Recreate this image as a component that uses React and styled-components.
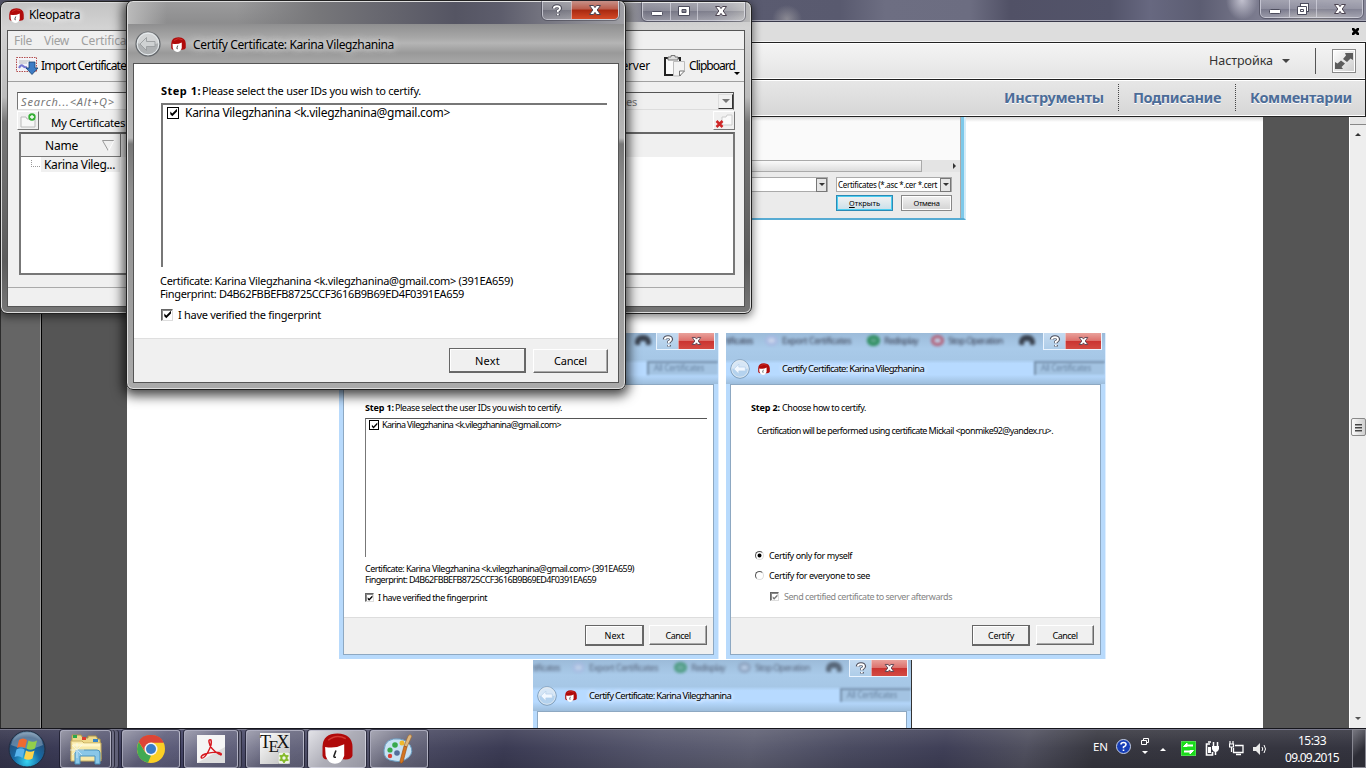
import React, { useLayoutEffect, useRef } from "react";
import styled, { createGlobalStyle, css } from "styled-components";

const Global = createGlobalStyle`
  * { box-sizing: border-box; }
  body { margin: 0; overflow: hidden; background: #555; }
  svg { display: block; flex: none; }
`;

const ui = `"Noto Sans", "Open Sans", sans-serif`;

/* ---------- text ---------- */

const Line = styled.span`
  display: block;
  flex: none;
  width: ${(p) => (p.$w ? `${p.$w}px` : "auto")};
  margin-left: ${(p) => p.$ml || 0}px;
  margin-top: ${(p) => p.$mt || 0}px;
  font-family: ${ui};
  font-size: ${(p) => p.$size || 11}px;
  line-height: ${(p) => p.$lh || 13}px;
  font-weight: ${(p) => (p.$bold ? 700 : 400)};
  font-style: ${(p) => (p.$italic ? "italic" : "normal")};
  color: ${(p) => p.$color || "#000"};
  white-space: pre;
  ${(p) => p.$shadow && css`text-shadow: ${p.$shadow};`}
`;

/* Spreads a label over the given width by adjusting its tracking. */
function Label({ w, children, ...rest }) {
  const ref = useRef(null);
  useLayoutEffect(() => {
    const el = ref.current;
    if (!w || !el) return;
    el.style.letterSpacing = "0px";
    const natural = el.getBoundingClientRect().width;
    const n = el.textContent.length;
    el.style.letterSpacing = `${(w - natural) / n}px`;
  }, [w, children]);
  return (
    <Line $w={w} {...rest}>
      <span ref={ref}>{children}</span>
    </Line>
  );
}

/* ---------- shared drawings ---------- */

const FaceIcon = ({ size = 15 }) => (
  <svg width={size} height={size} viewBox="0 0 30 30">
    <path d="M.500 22V13Q1 .500 15 .500Q29 1 29.500 13V22Q28.500 26 21 25.500H5Q1 25.500 .500 22Z" fill="#b00a0a" />
    <path d="M6 7Q14 .500 23 5.500" stroke="#d23a33" strokeWidth="1.500" fill="none" />
    <path d="M3 13.500Q13 15.500 21.500 11V22Q19 29.800 12.500 29.800Q6 29.500 3.500 22Z" fill="#fff" />
    <path d="M13.500 17L11.500 22.500Q11.200 23.800 13.500 23.500" stroke="#222" strokeWidth="1.500" fill="none" />
  </svg>
);

const BackIcon = ({ size = 26, blue }) => (
  <svg width={size} height={size} viewBox="0 0 26 26">
    <circle cx="13" cy="13" r="12" fill={blue ? "#b4d2ee" : "#aeb1b3"} stroke={blue ? "#7290ad" : "#63676b"} strokeWidth="1.2" />
    <path d="M2 12a11 11 0 0 1 22 0Q13 16 2 12Z" fill="#fff" opacity=".45" />
    <circle cx="13" cy="13" r="10.8" fill="none" stroke="#e8edf0" strokeWidth="1" />
    <path d="M5 13l6.500-6.500v4H20v5h-8.500v4Z" fill={blue ? "#f2f8ff" : "#cfd2d3"} stroke={blue ? "#b3cfe9" : "#999c9e"} strokeWidth=".9" />
  </svg>
);

const Glyph = {
  min: (
    <svg width="14" height="12" viewBox="0 0 14 12"><rect x="1.5" y="6.5" width="11" height="4" rx="1" fill="#fff" stroke="#4d4d5d" /></svg>
  ),
  max: (
    <svg width="14" height="12" viewBox="0 0 14 12"><path d="M1.5 1.5h11v9h-11ZM5 4.5v3h4v-3Z" fillRule="evenodd" fill="#fff" stroke="#4d4d5d" /></svg>
  ),
  restore: (
    <svg width="14" height="14" viewBox="0 0 14 14">
      <rect x="4.5" y="1.5" width="8" height="8" fill="#fff" stroke="#4d4d5d" />
      <path d="M1.5 4.5h9v8h-9ZM4.5 7.5v2h3v-2Z" fillRule="evenodd" fill="#fff" stroke="#4d4d5d" />
    </svg>
  ),
  close: (
    <svg width="14" height="12" viewBox="0 0 14 12"><path d="M1.5 1.5h4L7 3.6l1.5-2.1h4L9.2 6l3.3 4.5h-4L7 8.4l-1.5 2.1h-4L4.8 6Z" fill="#fff" stroke="#4b4350" /></svg>
  ),
  closeSmall: (
    <svg width="11" height="10" viewBox="0 0 14 12"><path d="M1.5 1.5h4L7 3.6l1.5-2.1h4L9.2 6l3.3 4.5h-4L7 8.4l-1.5 2.1h-4L4.8 6Z" fill="#fff" stroke="#5b4350" strokeWidth="1.2" /></svg>
  ),
  help: (
    <svg width="12" height="13" viewBox="0 0 12 13">
      <path d="M2.5 4.5Q3 2 6 2t3.300 2.300Q9.300 5.600 7 7v1.300M7 10v1.500" fill="none" stroke="#4b4b58" strokeWidth="3.600" />
      <path d="M2.800 4.500Q3 2.200 6 2.200t3 2.200Q9 5.500 6.800 6.800v1.400M6.800 9.800v1.400" fill="none" stroke="#fff" strokeWidth="1.900" />
    </svg>
  ),
};

const Check = ({ size = 12, color = "#000" }) => (
  <svg width={size} height={size} viewBox="0 0 12 12"><path d="M2.500 5v2.800L4.700 10 9.800 4.800V2L4.700 7.200Z" fill={color} /></svg>
);

const CheckBox = styled.span`
  display: flex;
  flex: none;
  align-items: center;
  justify-content: center;
  width: ${(p) => p.$size}px;
  height: ${(p) => p.$size}px;
  background: #fff;
  border: 1px solid;
  border-color: ${(p) => (p.$flat ? "#000" : "#666 #ddd #ddd #666")};
  ${(p) => !p.$flat && css`box-shadow: inset 1px 1px 0 #888;`}
`;

const Radio = styled.span`
  flex: none;
  width: 9px;
  height: 9px;
  border-radius: 50%;
  border: 1px solid;
  border-color: #555 #ddd #ddd #555;
  background: ${(p) => (p.$on ? "radial-gradient(circle, #000 0 1.500px, #fff 2.400px)" : "#fff")};
`;

const Row = styled.div`
  display: flex;
  align-items: center;
  gap: ${(p) => p.$gap || 0}px;
  height: ${(p) => (p.$h ? `${p.$h}px` : "auto")};
  margin-top: ${(p) => p.$mt || 0}px;
  margin-left: ${(p) => p.$ml || 0}px;
`;

const PushButton = styled.button`
  display: flex;
  align-items: center;
  justify-content: center;
  padding: 0;
  width: ${(p) => p.$w}px;
  height: ${(p) => p.$h}px;
  background: #f0f0f0;
  border: 1px solid;
  border-color: ${(p) => (p.$primary ? "#666" : "#fff #696969 #696969 #fff")};
  box-shadow: ${(p) => (p.$primary ? "inset -1px -1px 0 #696969, inset 1px 1px 0 #fff" : "inset -1px -1px 0 #a9a9a9")};
`;

/* ---------- caption buttons ---------- */

const Captions = styled.div`
  position: absolute;
  top: ${(p) => p.$top}px;
  right: ${(p) => p.$right}px;
  display: flex;
  height: ${(p) => p.$h || 19}px;
  border: 1px solid ${(p) => (p.$blue ? "#eaf4ff" : "rgba(235,235,245,.65)")};
  border-top: 0;
  border-radius: ${(p) => (p.$blue ? "0" : "0 0 5px 5px")};
  overflow: hidden;
  outline: 1px solid ${(p) => (p.$blue ? "transparent" : "rgba(40,40,55,.4)")};
`;

const Caption = styled.span`
  display: flex;
  align-items: center;
  justify-content: center;
  width: ${(p) => p.$w}px;
  border-left: 1px solid rgba(225, 225, 235, 0.6);
  background: ${(p) =>
    p.$red
      ? p.$soft
        ? "linear-gradient(#e9a19b, #dd716c 48%, #cb3431 52%, #d34b43)"
        : "linear-gradient(#c79188, #b95c4c 45%, #a82810 50%, #d44a27)"
      : p.$soft
        ? "linear-gradient(#c4daf0, #aecde9)"
        : "linear-gradient(rgba(255,255,255,.28), rgba(255,255,255,.12) 50%, rgba(70,70,90,.12) 51%, rgba(255,255,255,.2))"};
  &:first-child { border-left: 0; }
`;

/* ---------- reader ---------- */

const Desktop = styled.div`
  position: relative;
  display: flex;
  flex-direction: column;
  width: 1366px;
  height: 768px;
  overflow: hidden;
`;

const Reader = styled.div`
  position: relative;
  display: flex;
  flex-direction: column;
  height: 728px;
`;

const ReaderTitle = styled.div`
  height: 22px;
  flex: none;
  border-bottom: 1px solid #39394a;
  box-shadow: inset 0 -1px 0 #aaaab8;
  background:
    radial-gradient(ellipse 15px 14px at 787px 19px, #a2a0a4aa, transparent),
    radial-gradient(ellipse 16px 20px at 1242px 0, #d5d4e0cc, transparent),
    radial-gradient(ellipse 45px 18px at 1315px 24px, #c9c5b9aa, transparent),
    linear-gradient(90deg, #5a5b70 750px, #595a6f 840px, #6d6e82 885px, #6c6d81 970px, #515166 1010px, #53546a 1110px, #676880 1150px, #5c5d72 1200px, #7d7d90 1260px, #8a8a9b);
`;

const TabBar = styled.div`
  display: flex;
  align-items: center;
  justify-content: flex-end;
  flex: none;
  height: 21px;
  padding: 0 7px 2px 0;
  background: #ddd;
  border-bottom: 1px solid #222;
  box-shadow: inset 0 -1px 0 #f4f4f4;
`;

const ToolBar = styled.div`
  display: flex;
  align-items: center;
  justify-content: flex-end;
  flex: none;
  height: 37px;
  padding-right: 9px;
  background: linear-gradient(#f4f4f4, #e4e4e4);
  border-bottom: 1px solid #222;
  border-right: 1px solid #222;
  box-shadow: inset 0 1px 0 #fff, inset 0 -1px 0 #fff;
`;

const ToolDivider = styled.span`
  width: 1px;
  height: 26px;
  margin: 0 16px 0 25px;
  background: #555;
`;

const ExpandButton = styled.span`
  display: flex;
  align-items: center;
  justify-content: center;
  width: 24px;
  height: 24px;
  border: 1px solid #888;
  box-shadow: inset 0 0 0 1px #fff;
  background: linear-gradient(135deg, #fff, #ccc);
`;

const PanelBar = styled.div`
  display: flex;
  align-items: center;
  justify-content: flex-end;
  flex: none;
  height: 37px;
  padding: 0 13px 2px 0;
  background: linear-gradient(#e7e7e7, #d6d6d6);
  border-bottom: 1px solid #222;
  border-right: 1px solid #222;
  box-shadow: inset 0 1px 0 #fff, inset 0 -1px 0 #fff;
`;

const DotDivider = styled.span`
  height: 27px;
  margin: 0 14px;
  border-left: 1px dotted #444;
`;

const Workspace = styled.div`
  display: flex;
  flex: 1;
  min-height: 0;
  background: #555;
`;

const NavStrip = styled.div`
  flex: none;
  width: 42px;
  margin-right: 85px;
  background: #656565;
  border-left: 1px solid #2c2c2c;
  border-right: 1px solid #000;
  box-shadow: inset -1px 0 0 #999;
`;

const Page = styled.div`
  flex: none;
  width: 1136px;
  height: 611px;
  overflow: hidden;
  background: linear-gradient(#d8d8d8, #fff 5px);
`;

const ScrollTrack = styled.div`
  display: flex;
  flex-direction: column;
  align-items: center;
  width: 17px;
  margin-left: 86px;
  background: #eee;
  border-left: 1px solid #fff;
`;

const SplitBox = styled.span`
  width: 17px;
  height: 8px;
  background: #e6e6e6;
  border-bottom: 1px solid #888;
`;

const ScrollThumb = styled.span`
  display: flex;
  flex-direction: column;
  align-items: center;
  justify-content: center;
  gap: 2px;
  width: 15px;
  height: 18px;
  margin: 282px 0 281px;
  border: 1px solid #888;
  border-radius: 2px;
  background: linear-gradient(90deg, #fafafa, #cfcfcf);
`;

const Grip = styled.i`
  width: 7px;
  height: 1px;
  background: #444;
  box-shadow: 0 1px 0 #999;
`;

const Triangle = styled.i`
  flex: none;
  width: 0;
  height: 0;
  border: ${(p) => p.$s || 3}px solid transparent;
  ${(p) => (p.$up ? css`border-top: 0; border-bottom-color: ${p.$c || "#333"};` : css`border-bottom: 0; border-top-color: ${p.$c || "#333"};`)}
  margin-top: ${(p) => p.$mt || 0}px;
  margin-left: ${(p) => p.$ml || 0}px;
`;

/* ---------- file dialog figure ---------- */

const OpenFigure = styled.div`
  display: flex;
  flex-direction: column;
  align-items: flex-end;
  width: 627px;
  height: 103px;
  margin-left: 212px;
  background: #ebebeb;
  border-right: 2px solid #d2ebf8;
  border-bottom: 2px solid #57abd3;
  box-shadow: inset -3px 0 0 #7dc8e9, inset -4px 0 0 #aaa;
  padding-right: 4px;
`;

const FileArea = styled.div`
  width: 100%;
  height: 43px;
  background: linear-gradient(#d8d8d8, #fafafa 4px);
`;

const HScroll = styled.div`
  display: flex;
  align-items: center;
  justify-content: space-between;
  width: 100%;
  height: 12px;
  padding-right: 4px;
  background: #e4e4e4;
`;

const HThumb = styled.span`
  width: 583px;
  height: 12px;
  border: 1px solid #aaa;
  background: linear-gradient(#fafafa, #ddd);
`;

const SelectBox = styled.span`
  display: flex;
  align-items: center;
  justify-content: space-between;
  width: ${(p) => p.$w}px;
  height: 15px;
  border: 1px solid #aaa;
  background: #fff;
`;

const SelectArrow = styled.span`
  display: flex;
  align-items: center;
  justify-content: center;
  width: 11px;
  height: 14px;
  flex: none;
  border: 1px solid #777;
  background: #e6e6e6;
`;

const SmallButton = styled.span`
  display: flex;
  align-items: center;
  justify-content: center;
  width: ${(p) => p.$w}px;
  height: 16px;
  border: ${(p) => (p.$hot ? "1px solid #2c8ab5" : "1px solid #888")};
  box-shadow: inset 0 0 0 1px ${(p) => (p.$hot ? "#4bcdf0" : "#fff")};
  background: linear-gradient(#f2f2f2, ${(p) => (p.$hot ? "#c9dfe9" : "#d2d2d2")});
`;

/* ---------- wizard figures on the page ---------- */

const FigureRow = styled.div`
  display: flex;
  gap: 7px;
  margin-top: ${(p) => p.$mt}px;
  margin-left: ${(p) => p.$ml}px;
`;

const Figure = styled.div`
  position: relative;
  display: flex;
  flex-direction: column;
  flex: none;
  width: ${(p) => (p.$dark ? 379 : 380)}px;
  height: 326px;
  padding: 0 4px 4px;
  overflow: hidden;
  background: #b8dafc;
  border-right: 1px solid ${(p) => (p.$dark ? "#333" : "#deeeff")};
`;

const FigureHead = styled.div`
  position: relative;
  display: flex;
  align-items: center;
  flex: none;
  height: 51px;
  margin: 0 -4px;
  padding: 20px 0 0 4px;
  background: linear-gradient(#9cbbd9, #a9cae9 30%, #a6c7e6 52%, #b7daff 60%, #b7daff 82%, #9dbddb);
`;

const Ghost = styled.div`
  position: absolute;
  left: 0;
  top: 1px;
  display: flex;
  align-items: center;
  height: 12px;
  width: 320px;
  overflow: hidden;
  filter: blur(1.400px);
  opacity: ${(p) => (p.$pale ? 0.6 : 0.85)};
`;

const GhostRing = styled.i`
  flex: none;
  width: 13px;
  height: 11px;
  margin: 0 4px 0 ${(p) => p.$ml}px;
  border: 3px solid ${(p) => p.$c};
  border-radius: 50%;
  background: ${(p) => p.$fill || "transparent"};
`;

const Binoculars = styled.i`
  flex: none;
  width: 16px;
  height: 10px;
  margin-left: ${(p) => p.$ml}px;
  border: 5px solid #262a34;
  border-top-width: 6px;
  border-bottom-width: 0;
  border-radius: 7px 7px 2px 2px;
`;

const GhostField = styled.div`
  position: absolute;
  top: 28px;
  right: 0;
  width: 71px;
  height: 14px;
  padding-left: 5px;
  border-top: 2px solid #7690ab;
  border-left: 2px solid #7690ab;
  background: #a3c3e2;
  filter: blur(1.100px);
`;

const FigureBody = styled.div`
  display: flex;
  flex-direction: column;
  flex: none;
  height: 271px;
  background: #fff;
  border: 1px solid #8da8c2;
  padding: 16px 5px 0 21px;
`;

const FigureFoot = styled.div`
  display: flex;
  justify-content: flex-end;
  align-items: center;
  gap: ${(p) => p.$gap}px;
  height: 37px;
  margin: auto -5px 0 -21px;
  padding: 0 6px 2px 0;
  background: #f0f0f0;
  border-top: 1px solid #ddd;
`;

const FigureList = styled.div`
  height: 139px;
  width: 342px;
  margin-top: 4px;
  padding: 0 0 0 3px;
  border-top: 1px solid #555;
  border-left: 1px solid #777;
`;

const FigureCaptions = () => (
  <Captions $top={0} $right={3} $h={17} $blue>
    <Caption $w={21} $soft>{Glyph.help}</Caption>
    <Caption $w={36} $soft $red>{Glyph.closeSmall}</Caption>
  </Captions>
);

const FigureTitle = ({ pale }) => (
  <FigureHead>
    <Ghost $pale={pale}>
      <Label w={27} $size={9} $color="#223">tificates</Label>
      <GhostRing $ml={12} $c="#a9b9e2" $fill="#d2d9ee" />
      <Label w={69} $size={9} $color="#223">Export Certificates</Label>
      <GhostRing $ml={16} $c="#158243" $fill="#4d9f78" />
      <Label w={34} $size={9} $color="#223">Redisplay</Label>
      <GhostRing $ml={13} $c={pale ? "#8291ac" : "#b64b61"} $fill="#c2cfe6" />
      <Label w={55} $size={9} $color="#223">Stop Operation</Label>
      <Binoculars $ml={16} />
    </Ghost>
    <GhostField><Label w={50} $size={8} $lh={10} $color="#6883a0">All Certificates</Label></GhostField>
    <BackIcon size={20} blue />
    <Row $ml={8}><FaceIcon size={12} /></Row>
    <Label w={142} $ml={12} $size={9.5} $shadow="0 0 4px #fff, 0 0 5px #fff">Certify Certificate: Karina Vilegzhanina</Label>
    <FigureCaptions />
  </FigureHead>
);

const CroppedTitle = () => (
  <FigureHead>
    <Ghost><Binoculars $ml={296} /></Ghost>
    <GhostField><Label w={50} $size={8} $lh={10} $color="#6883a0">All Certificates</Label></GhostField>
    <FigureCaptions />
  </FigureHead>
);

/* ---------- top level windows ---------- */

const Window = styled.div`
  position: absolute;
  left: ${(p) => p.$x}px;
  top: ${(p) => p.$y}px;
  display: flex;
  flex-direction: column;
  width: ${(p) => p.$w}px;
  height: ${(p) => p.$h}px;
  border: 1px solid #222;
  border-radius: 7px;
  box-shadow: ${(p) => (p.$active ? "0 3px 12px 3px rgba(0,0,0,.72)" : "0 2px 8px 1px rgba(0,0,0,.5)")}, inset 0 0 0 1px #ddd;
  background: ${(p) => p.$bg};
  padding: 0 6px 6px;
`;

const kleoGlass = `
  linear-gradient(90deg, transparent 82%, #777786 86%, #898996 95%, #bbb) top / 100% 20px no-repeat,
  linear-gradient(#c3c3c3, #d3d3d3 26px, #bbb 95px, #777 120px, #5c5c5c 260px, #777)`;

const dialogGlass = `
  linear-gradient(90deg, #bbb 0, transparent 8%, transparent 22%, #77777a 38%, #555563 66%, #5d5d6c 75%, #a0a0a5 100%) top / 100% 23px no-repeat,
  linear-gradient(#9c9c9d, #8d8d8e 22px, #a6a6a6 36px, #b5b5b5 42px, #999 52px, #a5a5a5 60px, #b8b8b8 137px, #777 143px, #8f8f8f 190px, #aaa)`;

const KleoTitle = styled.div`
  display: flex;
  align-items: center;
  height: 28px;
  flex: none;
  padding: 0 0 2px 2px;
`;

const KleoClient = styled.div`
  display: flex;
  flex-direction: column;
  flex: 1;
  background: #f0f0f0;
  border: 1px solid #555;
`;

const MenuBar = styled.div`
  display: flex;
  align-items: center;
  height: 19px;
  padding-left: 6px;
  gap: 12px;
  border-bottom: 1px solid #a0a0a0;
`;

const KleoTools = styled.div`
  display: flex;
  align-items: center;
  justify-content: space-between;
  height: 32px;
  padding: 0 4px 0 8px;
  border-bottom: 1px solid #a0a0a0;
`;

const SearchRow = styled.div`
  display: flex;
  justify-content: space-between;
  margin: 10px 10px 0 9px;
`;

const Sunken = styled.div`
  display: flex;
  align-items: center;
  justify-content: space-between;
  width: ${(p) => p.$w}px;
  height: 18px;
  padding-left: 3px;
  background: ${(p) => p.$bg || "#fff"};
  border: 1px solid;
  border-color: #555 #555 #ddd #777;
`;

const DropKey = styled.span`
  display: flex;
  align-items: center;
  justify-content: center;
  width: 15px;
  height: 15px;
  background: #f0f0f0;
  border: 1px solid;
  border-color: #ddd #333 #333 #ddd;
`;

const TabRow = styled.div`
  display: flex;
  align-items: flex-end;
  justify-content: space-between;
  height: 19px;
  margin: 1px 9px 0 9px;
`;

const IconKey = styled.span`
  display: flex;
  align-items: center;
  justify-content: center;
  width: 22px;
  height: 19px;
  border: 1px solid;
  border-color: #fff #777 #777 #fff;
`;

const Tree = styled.div`
  height: 143px;
  margin: 2px 9px 0 11px;
  background: #fff;
  border: 2px solid;
  border-color: #666 #777 #777 #777;
`;

const TreeHead = styled.div`
  display: flex;
  align-items: center;
  height: 23px;
  background: #f0f0f0;
`;

const NameColumn = styled.div`
  display: flex;
  align-items: center;
  width: 100px;
  height: 23px;
  padding: 1px 0 0 24px;
  border-right: 1px solid #777;
  border-bottom: 1px solid #777;
`;

const TreeBranch = styled.i`
  width: 9px;
  height: 7px;
  margin: 0 1px 3px 10px;
  border-left: 1px dotted #999;
  border-bottom: 1px dotted #999;
`;

const SelectedName = styled.span`
  display: flex;
  padding: 0 5px 0 3px;
  background: #f0f0f0;
`;

const StatusBar = styled.div`
  height: 19px;
  margin-top: auto;
  border-top: 1px solid #aaa;
`;

const DialogHead = styled.div`
  display: flex;
  align-items: center;
  flex: none;
  height: 62px;
  padding: 24px 0 0 2px;
`;

const DialogBody = styled.div`
  display: flex;
  flex-direction: column;
  flex: 1;
  padding: 20px 10px 0 27px;
  background: #fff;
  border: 1px solid #555;
`;

const UserList = styled.div`
  width: 446px;
  height: 164px;
  margin-top: 6px;
  padding: 1px 0 0 4px;
  border-top: 2px solid #777;
  border-left: 2px solid #777;
`;

const DialogFoot = styled.div`
  display: flex;
  justify-content: flex-end;
  align-items: center;
  gap: 7px;
  height: 44px;
  margin: auto -10px 0 -27px;
  padding-right: 10px;
  background: #f0f0f0;
  border-top: 1px solid #dfdfdf;
`;

/* ---------- taskbar ---------- */

const TaskBar = styled.div`
  display: flex;
  align-items: center;
  height: 40px;
  border-top: 1px solid #15151c;
  box-shadow: inset 0 1px 0 #77778a;
  background:
    linear-gradient(rgba(255,255,255,.1), rgba(255,255,255,0) 50%, rgba(0,0,0,.12)),
    linear-gradient(100deg, #35354c 0, #434365 12%, #53536b 27%, #3b3b54 37%, #55566c 48%, #5e5f72 55%, #4a4b61 62%, #3f3f57 69%, #50505f 75%, #373740 80%, #34343f 100%);
`;

const StartSlot = styled.div`
  width: 54px;
  padding-left: 8px;
  margin-right: 6px;
`;

const TaskButton = styled.div`
  position: relative;
  display: flex;
  align-items: center;
  justify-content: center;
  width: ${(p) => p.$w}px;
  height: 38px;
  margin-right: ${(p) => p.$mr}px;
  border: 1px solid rgba(205, 205, 220, 0.65);
  border-radius: 3px;
  background: ${(p) =>
    p.$active
      ? "linear-gradient(135deg, #e2e2e7, #aeaeb8 50%, #9696a2)"
      : "linear-gradient(135deg, rgba(255,255,255,.44), rgba(255,255,255,.16) 50%, rgba(255,255,255,.1))"};
  box-shadow: 0 0 0 1px rgba(20, 20, 35, 0.65)${(p) => (p.$stack ? ", 3px 0 0 #6c6c82, 4px 0 0 #2b2b3c" : "")}${(p) => (p.$stack > 1 ? ", 7px 0 0 #606077, 8px 0 0 #2b2b3c" : "")};
`;

const Tray = styled.div`
  display: flex;
  align-items: center;
  margin-left: auto;
  height: 39px;
`;

const TraySlot = styled.div`
  width: ${(p) => p.$w}px;
`;

const Clock = styled.div`
  display: flex;
  flex-direction: column;
  align-items: center;
  gap: 4px;
  width: 56px;
  margin: 0 12px 0 0;
`;

const ShowDesktop = styled.div`
  width: 14px;
  height: 39px;
  border: 1px solid #888892;
  background: linear-gradient(135deg, #777780, #2d2d36 60%);
`;

const StartOrb = () => (
  <svg width="38" height="38" viewBox="0 0 38 38">
    <defs>
      <radialGradient id="orb" cx=".5" cy=".85" r=".9">
        <stop offset="0" stopColor="#35d4f2" /><stop offset=".4" stopColor="#176ba6" /><stop offset=".75" stopColor="#254e78" /><stop offset="1" stopColor="#8eabc1" />
      </radialGradient>
    </defs>
    <circle cx="19" cy="19" r="18" fill="url(#orb)" stroke="#202c3f" />
    <path d="M3 15Q6 3 19 2.500T35 15Q20 22 3 15Z" fill="#fff" opacity=".27" />
    <path d="M11 10Q15 7 19 10L17 18Q13 15.500 9 18Z" fill="#ef6a30" />
    <path d="M20.500 10.500Q25 13 29 10.500L27 18.500Q22 21 18.500 18.500Z" fill="#92ce4b" />
    <path d="M8.500 19.500Q13 17 16.700 19.700L14.500 28Q11 25 6.500 27Z" fill="#58b4ec" />
    <path d="M18 20.500Q22 23 26.500 20.500L24.500 28.500Q20 31 16 28.500Z" fill="#fdd34b" />
  </svg>
);

const FolderIcon = () => (
  <svg width="34" height="32" viewBox="0 0 34 32">
    <path d="M3 4V2h9l2 3h5V3h8l2 3h2l1 20H2Z" fill="#eed98b" stroke="#ae9549" />
    <path d="M4 2h4v3H4Z" fill="#2ca84b" /><path d="M13 4h4v3h-4Z" fill="#dc3e30" /><path d="M24 6h5v3h-5Z" fill="#3885c7" />
    <path d="M2 8h11l2 2h17v18H2Z" fill="#f8e9a9" stroke="#c8ae60" />
    <path d="M4 12h27" stroke="#fff6cb" strokeWidth="3" />
    <path d="M6 31V20Q6 17 9 17H28Q31 17 31 20V31H26V23H11V31Z" fill="#8ac7e8" stroke="#4b92bb" />
    <path d="M8 10v15M1 17h14M3 12l10 10M13 12L3 22" stroke="#effcff" strokeWidth="1" opacity=".6" />
  </svg>
);

const ChromeIcon = () => (
  <svg width="28" height="28" viewBox="0 0 28 28">
    <circle cx="14" cy="14" r="14" fill="#fbcf25" />
    <path d="M14 14L2 7Q6 0 14 0T26.500 7.500H14Z" fill="#dd4536" />
    <path d="M1.900 7L8 17Q10 20 14 20.500L11 27.700Q0 25 0 14Q0 10 1.900 7Z" fill="#41a953" />
    <path d="M14 7.500h12.500Q24 0 14 0T1.900 7L8 16.500Z" fill="#dd4536" />
    <circle cx="14" cy="14" r="6.500" fill="#f4f4f4" /><circle cx="14" cy="14" r="5" fill="#397cc7" />
  </svg>
);

const AcrobatIcon = () => (
  <svg width="28" height="28" viewBox="0 0 28 28">
    <rect width="28" height="28" fill="#f5f5f5" /><path d="M0 28L28 12V28Z" fill="#ddd" />
    <path d="M14 5Q11.500 4 12 7Q13 14 22 19Q25 21 24 18.500Q21 15.500 8 19Q3 21 4.500 23Q7 24 11 17Q15.500 9 14 5Z" fill="none" stroke="#d71920" strokeWidth="1.500" />
  </svg>
);

const TexBox = styled.div`
  position: relative;
  width: 30px;
  height: 31px;
  background: linear-gradient(135deg, #fff, #bbb);
`;

const TexWord = styled.span`
  position: absolute;
  left: 0;
  top: -2px;
  font: 18px/22px "Liberation Serif", serif;
  letter-spacing: -2.5px;
  color: #111;
  sub { font-size: 17px; line-height: 0; vertical-align: -4px; }
`;

const TexGear = styled.span`
  position: absolute;
  right: 0;
  bottom: 0;
`;

const TexIcon = () => (
  <TexBox>
    <TexWord>T<sub>E</sub>X</TexWord>
    <TexGear>
      <svg width="12" height="12" viewBox="0 0 12 12">
        <rect width="12" height="12" rx="2" fill="#f0f4e9" stroke="#999" strokeWidth=".6" />
        <circle cx="6" cy="6" r="2.700" fill="none" stroke="#84b928" strokeWidth="2" /><path d="M6 1v2M6 9v2M1.600 3.500l2 1M8.500 7.500l2 1M1.600 8.500l2-1M8.500 4.500l2-1" stroke="#84b928" strokeWidth="1.700" />
      </svg>
    </TexGear>
  </TexBox>
);

const PaintIcon = () => (
  <svg width="34" height="32" viewBox="0 0 34 32">
    <path d="M18 6Q3 4 2 17Q1 27 12 28Q20 30 27 24Q32 19 28 12Q25 7 18 6Z" fill="#c8e2f3" stroke="#6a9cc1" />
    <circle cx="13" cy="12" r="2.800" fill="#39a94c" /><circle cx="20" cy="10" r="2.500" fill="#efb82c" /><circle cx="8" cy="17" r="2.600" fill="#39a94c" /><circle cx="8" cy="23" r="2.200" fill="#d94238" /><circle cx="15" cy="20" r="2.800" fill="#536e9b" />
    <path d="M30 3L25 14L22 13L26 3Q28 0 30 3Z" fill="#deb77d" stroke="#9d6c35" strokeWidth=".7" />
    <path d="M22 13L25 14L21 29Q18 32 18 28Z" fill="#d37621" stroke="#994e12" strokeWidth=".6" />
  </svg>
);

const white = "#fff";

export default function App() {
  return (
    <Desktop>
      <Global />
      <Reader>
        <ReaderTitle />
        <Captions $top={0} $right={3} $h={18}>
          <Caption $w={28}>{Glyph.min}</Caption>
          <Caption $w={27}>{Glyph.restore}</Caption>
          <Caption $w={46}>{Glyph.close}</Caption>
        </Captions>
        <TabBar>
          <svg width="7" height="7" viewBox="0 0 7 7"><path d="M0 0h2l1.500 1.500L5 0h2v2L5.500 3.500 7 5v2H5L3.500 5.500 2 7H0V5l1.500-1.500L0 2Z" /></svg>
        </TabBar>
        <ToolBar>
          <Label w={64} $size={12.5} $lh={16} $color="#333">Настройка</Label>
          <Triangle $s={4} $ml={9} $c="#444" />
          <ToolDivider />
          <ExpandButton>
            <svg width="20" height="20" viewBox="0 0 20 20"><path d="M11 2h8v7l-2.500-1.500-3.500 3.500-4-3 3-3.500ZM9 18H1v-7l2.500 1.500L7 9.500l4 3-3.500 3.500Z" fill="#5c5c5c" /></svg>
          </ExpandButton>
        </ToolBar>
        <PanelBar>
          <Label w={100} $size={14.5} $lh={18} $bold $color="#4c6c98" $shadow="0 1px 0 #fff">Инструменты</Label>
          <DotDivider />
          <Label w={88} $size={14.5} $lh={18} $bold $color="#4c6c98" $shadow="0 1px 0 #fff">Подписание</Label>
          <DotDivider />
          <Label w={102} $size={14.5} $lh={18} $bold $color="#4c6c98" $shadow="0 1px 0 #fff">Комментарии</Label>
        </PanelBar>
        <Workspace>
          <NavStrip />
          <Page>
            <OpenFigure>
              <FileArea />
              <HScroll><HThumb /><svg width="3" height="6" viewBox="0 0 3 6"><path d="M0 0L3 3 0 6Z" fill="#333" /></svg></HScroll>
              <Row $mt={5} $gap={8}>
                <SelectBox $w={400}><span /><SelectArrow><Triangle /></SelectArrow></SelectBox>
                <SelectBox $w={116}>
                  <Label w={99} $ml={1} $size={8} $lh={12}>Certificates (*.asc *.cer *.cert</Label>
                  <SelectArrow><Triangle /></SelectArrow>
                </SelectBox>
                <span />
              </Row>
              <Row $mt={3} $gap={8}>
                <SmallButton $w={57} $hot><Label w={31} $size={7.5} $lh={10}><u>О</u>ткрыть</Label></SmallButton>
                <SmallButton $w={51}><Label w={26} $size={7.5} $lh={10}>Отмена</Label></SmallButton>
                <span />
              </Row>
            </OpenFigure>

            <FigureRow $mt={113} $ml={212}>
              <Figure>
                <CroppedTitle />
                <FigureBody>
                  <Row><Label w={29} $size={9} $bold>Step 1:</Label><Label w={167} $ml={1} $size={9}>Please select the user IDs you wish to certify.</Label></Row>
                  <FigureList>
                    <Row $gap={3}>
                      <CheckBox $size={10} $flat><Check size={9} /></CheckBox>
                      <Label w={179} $size={9} $lh={12}>{"Karina Vilegzhanina <k.vilegzhanina@gmail.com>"}</Label>
                    </Row>
                  </FigureList>
                  <Row $mt={5}><Label w={269} $size={9}>{"Certificate: Karina Vilegzhanina <k.vilegzhanina@gmail.com> (391EA659)"}</Label></Row>
                  <Row $h={10}><Label w={231} $size={9} $lh={10}>Fingerprint: D4B62FBBEFB8725CCF3616B9B69ED4F0391EA659</Label></Row>
                  <Row $mt={6} $gap={4}>
                    <CheckBox $size={9}><Check size={8} /></CheckBox>
                    <Label w={109} $size={9}>I have verified the fingerprint</Label>
                  </Row>
                  <FigureFoot $gap={5}>
                    <PushButton $w={59} $h={21} $primary><Label w={20} $size={9}>Next</Label></PushButton>
                    <PushButton $w={58} $h={20}><Label w={25} $size={9}>Cancel</Label></PushButton>
                  </FigureFoot>
                </FigureBody>
              </Figure>
              <Figure>
                <FigureTitle />
                <FigureBody>
                  <Row $ml={-1}><Label w={29} $size={9} $bold>Step 2:</Label><Label w={84} $ml={2} $size={9}>Choose how to certify.</Label></Row>
                  <Row $mt={10} $ml={5}><Label w={296} $size={9}>{"Certification will be performed using certificate Mickail <ponmike92@yandex.ru>."}</Label></Row>
                  <Row $mt={112} $ml={3} $gap={5}><Radio $on /><Label w={83} $size={9}>Certify only for myself</Label></Row>
                  <Row $mt={7} $ml={3} $gap={5}><Radio /><Label w={101} $size={9}>Certify for everyone to see</Label></Row>
                  <Row $mt={8} $ml={18} $gap={5}><CheckBox $size={9}><Check size={8} color="#777" /></CheckBox><Label w={168} $size={9} $color="#858585">Send certified certificate to server afterwards</Label></Row>
                  <FigureFoot $gap={6}>
                    <PushButton $w={58} $h={21} $primary><Label w={26} $size={9}>Certify</Label></PushButton>
                    <PushButton $w={58} $h={20}><Label w={25} $size={9}>Cancel</Label></PushButton>
                  </FigureFoot>
                </FigureBody>
              </Figure>
            </FigureRow>

            <FigureRow $mt={1} $ml={406}>
              <Figure $dark>
                <FigureTitle pale />
                <FigureBody />
              </Figure>
            </FigureRow>
          </Page>
          <ScrollTrack>
            <SplitBox />
            <Triangle $up $mt={8} />
            <ScrollThumb><Grip /><Grip /><Grip /></ScrollThumb>
            <Triangle $c="#555" />
          </ScrollTrack>
        </Workspace>
      </Reader>

      <Window $x={0} $y={1} $w={752} $h={313} $bg={kleoGlass}>
        <KleoTitle>
          <FaceIcon size={15} />
          <Label w={51} $ml={5} $size={12} $lh={16} $shadow="0 0 6px #fff, 0 0 8px #fff">Kleopatra</Label>
        </KleoTitle>
        <Captions $top={0} $right={6}>
          <Caption $w={27}>{Glyph.min}</Caption>
          <Caption $w={27}>{Glyph.max}</Caption>
          <Caption $w={47}>{Glyph.close}</Caption>
        </Captions>
        <KleoClient>
          <MenuBar>
            <Label w={18} $size={12} $color="#a0a0a0">File</Label>
            <Label w={25} $size={12} $color="#a0a0a0">View</Label>
            <Label w={62} $size={12} $color="#a0a0a0">Certificates</Label>
          </MenuBar>
          <KleoTools>
            <Row $gap={3}>
              <svg width="22" height="19" viewBox="0 0 22 19">
                <rect x=".5" y="1.500" width="20" height="14" fill="#f3f3f8" stroke="#b34d4d" strokeDasharray="1.500 1" />
                <path d="M3 5h11M3 7h8" stroke="#bbb" /><path d="M3 12q2-4 4-2t4 1" stroke="#7777cf" fill="none" strokeWidth="2" />
                <path d="M13 6h6v6h3l-6 6.500-6-6.500h3Z" fill="#3d7cc5" stroke="#16406f" strokeWidth=".8" />
              </svg>
              <Label w={90} $size={12} $lh={16}>Import Certificates</Label>
            </Row>
            <Row>
              <Label w={35} $size={12} $lh={16}>Server</Label>
              <Row $ml={13} $gap={3}>
                <svg width="23" height="22" viewBox="0 0 23 22">
                  <rect x="2" y="3" width="15" height="17" fill="#fafafa" stroke="#222" strokeWidth="2" />
                  <path d="M5 5V2h3V.500h4V2h3v3Z" fill="#ddd" stroke="#777" />
                  <path d="M10.500 6.500h11v9l-5 5.500h-6Z" fill="#f2f2f2" stroke="#bbb" /><path d="M16.500 21v-5h5Z" fill="#fff" stroke="#777" />
                </svg>
                <Label w={46} $size={12} $lh={16}>Clipboard</Label>
              </Row>
              <Triangle $s={3} $mt={16} $ml={-1} $c="#000" />
            </Row>
          </KleoTools>
          <SearchRow>
            <Sunken $w={200}><Label w={94} $size={11} $italic $color="#777">{"Search...<Alt+Q>"}</Label></Sunken>
            <Sunken $w={180} $bg="#f0f0f0">
              <Label w={70} $ml={9} $size={11} $color="#777">All Certificates</Label>
              <DropKey><Triangle $s={4} $c="#777" /></DropKey>
            </Sunken>
          </SearchRow>
          <TabRow>
            <Row $gap={11}>
              <IconKey>
                <svg width="18" height="16" viewBox="0 0 18 16"><path d="M2 14V4h5l1 2h8v8Z" fill="#f7f7f7" stroke="#bbb" /><circle cx="13" cy="4" r="3.700" fill="#36af36" /><path d="M13 2v4M11 4h4" stroke="#fff" strokeWidth="1.300" /></svg>
              </IconKey>
              <Label w={74} $mt={4} $ml={1} $size={11.5}>My Certificates</Label>
            </Row>
            <IconKey>
              <svg width="18" height="16" viewBox="0 0 18 16"><path d="M7 12V4h4l1-2h5v10Z" fill="#fafafa" stroke="#ccc" /><path d="M1.500 8l6 6M7.500 8l-6 6" stroke="#cf2727" strokeWidth="2.500" /></svg>
            </IconKey>
          </TabRow>
          <Tree>
            <TreeHead>
              <NameColumn>
                <Label w={33} $size={12}>Name</Label>
                <Row $ml={24}><svg width="13" height="12" viewBox="0 0 13 12"><path d="M6.500 11L.500 .500H12" fill="none" stroke="#999" /><path d="M12 .500L6.500 11" stroke="#fff" /></svg></Row>
              </NameColumn>
            </TreeHead>
            <Row $h={15}>
              <TreeBranch />
              <SelectedName><Label w={71} $size={12} $lh={15}>Karina Vileg...</Label></SelectedName>
              <Label $ml={6} $size={12} $lh={15}>k</Label>
            </Row>
          </Tree>
          <StatusBar />
        </KleoClient>
      </Window>

      <Window $x={126} $y={0} $w={500} $h={390} $bg={dialogGlass} $active>
        <DialogHead>
          <BackIcon size={26} />
          <Row $ml={10}><FaceIcon size={15} /></Row>
          <Label w={201} $ml={7} $mt={1} $size={12} $lh={16} $shadow="0 0 7px #ddd, 0 0 9px #ddd">Certify Certificate: Karina Vilegzhanina</Label>
        </DialogHead>
        <Captions $top={0} $right={6}>
          <Caption $w={28}>{Glyph.help}</Caption>
          <Caption $w={47} $red>{Glyph.close}</Caption>
        </Captions>
        <DialogBody>
          <Row><Label w={40} $size={11} $bold>Step 1:</Label><Label w={219} $ml={1} $size={11}>Please select the user IDs you wish to certify.</Label></Row>
          <UserList>
            <Row $gap={6}>
              <CheckBox $size={12} $flat><Check size={11} /></CheckBox>
              <Label w={265} $size={12} $lh={13}>{"Karina Vilegzhanina <k.vilegzhanina@gmail.com>"}</Label>
            </Row>
          </UserList>
          <Row $mt={7} $ml={-1}><Label w={353} $size={11}>{"Certificate: Karina Vilegzhanina <k.vilegzhanina@gmail.com> (391EA659)"}</Label></Row>
          <Row $ml={-1}><Label w={304} $size={11}>Fingerprint: D4B62FBBEFB8725CCF3616B9B69ED4F0391EA659</Label></Row>
          <Row $mt={8} $gap={5}>
            <CheckBox $size={12}><Check size={11} /></CheckBox>
            <Label w={143} $size={11}>I have verified the fingerprint</Label>
          </Row>
          <DialogFoot>
            <PushButton $w={77} $h={25} $primary><Label w={25} $size={11}>Next</Label></PushButton>
            <PushButton $w={75} $h={24}><Label w={33} $size={11}>Cancel</Label></PushButton>
          </DialogFoot>
        </DialogBody>
      </Window>

      <TaskBar>
        <StartSlot><StartOrb /></StartSlot>
        <TaskButton $w={51} $mr={11} $stack={2}><FolderIcon /></TaskButton>
        <TaskButton $w={58} $mr={4}><ChromeIcon /></TaskButton>
        <TaskButton $w={54} $mr={8} $stack={1}><AcrobatIcon /></TaskButton>
        <TaskButton $w={58} $mr={4}><TexIcon /></TaskButton>
        <TaskButton $w={58} $mr={4} $active><FaceIcon size={31} /></TaskButton>
        <TaskButton $w={58} $mr={0}><PaintIcon /></TaskButton>
        <Tray>
          <TraySlot $w={23}><Label w={15} $mt={-4} $size={11.5} $color={white}>EN</Label></TraySlot>
          <TraySlot $w={25}>
            <Row $mt={-5}><svg width="15" height="15" viewBox="0 0 15 15"><circle cx="7.500" cy="7.500" r="7" fill="#173eb6" stroke="#c6d0e7" /><path d="M5 5.500Q5 3.500 7.500 3.500t2.500 2Q10 7 7.500 8v1.200M7.500 10.500v1.500" fill="none" stroke="#fff" strokeWidth="1.600" /></svg></Row>
          </TraySlot>
          <TraySlot $w={19}>
            <Row $mt={-5}><svg width="9" height="19" viewBox="0 0 9 19"><path d="M2.500 3V1.500h5v4H6M.500 3.500h5v4h-5Z" fill="none" stroke="#fff" /><path d="M1 14h6L4 17Z" fill="#fff" /></svg></Row>
          </TraySlot>
          <TraySlot $w={21}><Triangle as="div" $up $c="#fff" $s={3} $mt={2} /></TraySlot>
          <TraySlot $w={24}>
            <svg width="15" height="15" viewBox="0 0 15 15"><rect width="15" height="15" rx="1.500" fill="#1bdb1b" stroke="#d4ffd4" strokeWidth=".5" /><path d="M12 4.500H5M3 10.500h7" fill="none" stroke="#fff" strokeWidth="2" /><path d="M2.500 5.500L6 2v3.500ZM12.500 9.500L9 13V9.500Z" fill="#fff" stroke="#fff" /></svg>
          </TraySlot>
          <TraySlot $w={24}>
            <svg width="15" height="16" viewBox="0 0 15 16"><path d="M5 3H1.500v11h6v-3M3 1h3" stroke="#fff" strokeWidth="1.600" fill="none" /><path d="M3 6v6h3V6Z" fill="#fff" /><path d="M7 5h7v3q-1 3-3.500 3T7 8Z" fill="#fff" /><path d="M8.500 1v4M12.500 1v4M10.500 10v4" stroke="#fff" strokeWidth="1.500" /></svg>
          </TraySlot>
          <TraySlot $w={24}>
            <svg width="15" height="15" viewBox="0 0 15 15"><path d="M6 4.500h8v7H4.500V7M7 13.500h5" fill="none" stroke="#fff" strokeWidth="1.300" /><path d="M1 0v3M4 0v3M.500 3h4v3h-4ZM2.500 6v5" fill="none" stroke="#fff" strokeWidth="1.200" /></svg>
          </TraySlot>
          <TraySlot $w={31}>
            <svg width="15" height="14" viewBox="0 0 15 14"><path d="M0 5h3l4-4v12L3 9H0Z" fill="#e9e9e9" /><path d="M9 5q1.500 2 0 4M11 3q3 4 0 8" fill="none" stroke="#fff" /></svg>
          </TraySlot>
          <Clock>
            <Label w={28} $size={12} $color={white}>15:33</Label>
            <Label w={54} $size={12} $color={white}>09.09.2015</Label>
          </Clock>
          <ShowDesktop />
        </Tray>
      </TaskBar>
    </Desktop>
  );
}
